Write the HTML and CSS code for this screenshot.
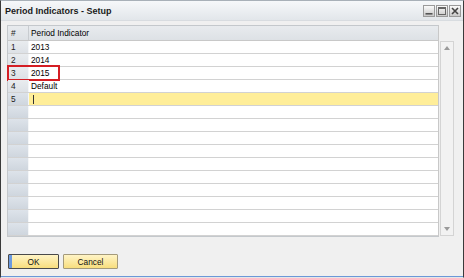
FILE: index.html
```html
<!DOCTYPE html>
<html>
<head>
<meta charset="utf-8">
<link rel="stylesheet" href="styles.css">
</head>
<body>
<div class="window">
  <div class="titlebar">
    <span class="title">Period Indicators - Setup</span>
    <div class="controls">
      <span class="ctl"><svg width="10" height="10" viewBox="0 0 10 10"><rect x="1.5" y="7" width="7" height="1.6" fill="#555"/></svg></span>
      <span class="ctl"><svg width="10" height="10" viewBox="0 0 10 10"><rect x="1.5" y="1.5" width="7" height="7" fill="none" stroke="#666" stroke-width="1"/><rect x="1.5" y="1.5" width="7" height="1.5" fill="#666"/></svg></span>
      <span class="ctl"><svg width="10" height="10" viewBox="0 0 10 10"><path d="M2 2 L8 8 M8 2 L2 8" stroke="#444" stroke-width="1.6"/></svg></span>
    </div>
  </div>
  <div class="content">
    <div class="grid">
      <div class="table">
        <div class="row head"><div class="num">#</div><div class="cell">Period Indicator</div></div>
        <div class="row"><div class="num">1</div><div class="cell">2013</div></div>
        <div class="row"><div class="num">2</div><div class="cell">2014</div></div>
        <div class="row marked"><div class="num">3</div><div class="cell">2015</div><span class="mark"></span></div>
        <div class="row"><div class="num">4</div><div class="cell">Default</div></div>
        <div class="row active"><div class="num">5</div><div class="cell"><span class="caret"></span></div></div>
        <div class="row empty"><div class="num"></div><div class="cell"></div></div>
        <div class="row empty"><div class="num"></div><div class="cell"></div></div>
        <div class="row empty"><div class="num"></div><div class="cell"></div></div>
        <div class="row empty"><div class="num"></div><div class="cell"></div></div>
        <div class="row empty"><div class="num"></div><div class="cell"></div></div>
        <div class="row empty"><div class="num"></div><div class="cell"></div></div>
        <div class="row empty"><div class="num"></div><div class="cell"></div></div>
        <div class="row empty"><div class="num"></div><div class="cell"></div></div>
        <div class="row empty"><div class="num"></div><div class="cell"></div></div>
        <div class="row empty"><div class="num"></div><div class="cell"></div></div>
      </div>
      <div class="scroll-col">
        <div class="scrollbar">
          <span class="arrow up"></span>
          <span class="arrow down"></span>
        </div>
      </div>
    </div>
    <div class="footer">
      <button class="btn ok">OK</button>
      <button class="btn cancel">Cancel</button>
    </div>
  </div>
</div>
</body>
</html>
```

FILE: styles.css
```css
* { box-sizing: border-box; }
html, body { margin: 0; padding: 0; background: #f0f0f0; }
body { font-family: "Liberation Sans", Arial, sans-serif; font-size: 8.3px; color: #000; }

.window {
  width: 464px;
  height: 278px;
  background: #f0f0f0;
  border-left: 1px solid #3a3a3a;
  border-right: 1px solid #3a3a3a;
  border-top: 1px solid #a8b0b8;
  border-bottom: 1px solid #e6e6e6;
  box-shadow: inset 0 -1px 0 #6c98d8;
  display: flex;
  flex-direction: column;
}

.titlebar {
  height: 20px;
  display: flex;
  align-items: center;
  justify-content: space-between;
  padding: 0 2px 0 4px;
  background: linear-gradient(#f6f8fa, #e2e6ea);
  border-bottom: 1px solid #d8dce0;
}
.title { font-weight: bold; font-size: 9px; color: #1a1a1a; }
.controls { display: flex; gap: 1px; }
.ctl {
  width: 12px; height: 12px;
  display: flex; align-items: center; justify-content: center;
  background: linear-gradient(#fafafa, #c8c8c8);
  border: 1px solid #9a9a9a;
}

.content {
  flex: 1;
  display: flex;
  flex-direction: column;
  padding: 4px 9px 0 6px;
}

.grid { display: flex; }
.table {
  width: 433px;
  border: 1px solid #c4c8cc;
  border-right: 1px solid #c8c8c8;
  background: #fff;
}
.row {
  display: flex;
  height: 13px;
  border-bottom: 1px solid #d2d2d2;
  position: relative;
  line-height: 12px;
}
.row.head {
  height: 15px;
  line-height: 14px;
  background: linear-gradient(#e8ebee, #dde1e5);
  border-bottom: 1px solid #c8c8c8;
}
.num {
  width: 21px;
  padding-left: 3px;
  background: linear-gradient(#e9ecef, #dde1e6);
  border-right: 1px solid #f4f6f8;
  color: #222;
}
.row.head .num { background: transparent; border-right: 1px solid #c8ccd0; }
.row.empty .num { background: linear-gradient(#dde3ea, #cfd6de); }
.row.active .num { background: linear-gradient(#dde3ea, #cfd6de); }
.cell { flex: 1; padding-left: 2px; }
.row.active .cell { background: #ffee99; display: flex; align-items: center; }
.caret { display: block; width: 1px; height: 9px; background: #333; margin-left: 2px; }

.mark {
  position: absolute;
  left: -1px;
  top: -2px;
  width: 53px;
  height: 16px;
  border: 2px solid #d41e24;
}

.scroll-col { width: 15px; padding-top: 16px; }
.scrollbar {
  height: 195px;
  margin-left: 1px;
  border: 1px solid #d4d4d4;
  background: #f2f2f2;
  display: flex;
  flex-direction: column;
  justify-content: space-between;
  align-items: center;
  padding: 4px 0;
}
.arrow { width: 0; height: 0; border-left: 3.5px solid transparent; border-right: 3.5px solid transparent; }
.arrow.up { border-bottom: 4px solid #9a9a9a; }
.arrow.down { border-top: 4px solid #9a9a9a; }

.footer {
  display: flex;
  gap: 4px;
  margin-top: 17px;
  padding-left: 1px;
}
.btn {
  height: 15px;
  padding: 0;
  font-family: "Liberation Sans", Arial, sans-serif;
  font-size: 8.3px;
  color: #111;
  background: linear-gradient(#fff4c6, #f8de7e);
  border: 1px solid #a49a7a;
  border-radius: 1px;
}
.btn.ok { width: 51px; border-color: #4a4a4a; box-shadow: inset 3px 0 0 #6c9ae0; }
.btn.cancel { width: 55px; }
```
